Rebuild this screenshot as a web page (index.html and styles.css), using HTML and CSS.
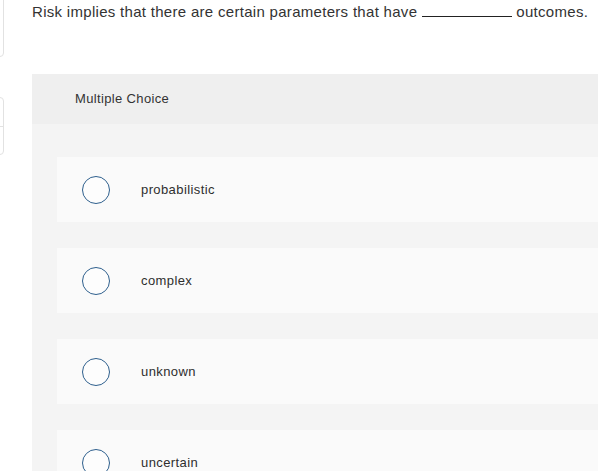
FILE: index.html
```html
<!DOCTYPE html>
<html lang="en">
<head>
<meta charset="utf-8">
<link rel="stylesheet" href="styles.css">
</head>
<body>
<div class="page">
  <aside class="rail">
    <div class="rail-box rail-box-top"></div>
    <div class="rail-box rail-box-split">
      <div class="rail-cell"></div>
      <div class="rail-cell"></div>
    </div>
  </aside>
  <main class="content">
    <p class="question">Risk implies that there are certain parameters that have <span class="blank"></span> outcomes.</p>
    <section class="panel">
      <header class="panel-head">Multiple Choice</header>
      <div class="options">
        <label class="option"><span class="radio"></span><span class="opt-text">probabilistic</span></label>
        <label class="option"><span class="radio"></span><span class="opt-text">complex</span></label>
        <label class="option"><span class="radio"></span><span class="opt-text">unknown</span></label>
        <label class="option"><span class="radio"></span><span class="opt-text">uncertain</span></label>
      </div>
    </section>
  </main>
</div>
</body>
</html>
```

FILE: styles.css
```css
html, body {
  margin: 0;
  padding: 0;
  background: #ffffff;
  overflow: hidden;
  height: 471px;
}
.page {
  display: flex;
  align-items: flex-start;
  font-family: "Liberation Sans", Arial, sans-serif;
  color: #333333;
}
.rail {
  display: flex;
  flex-direction: column;
  gap: 40px;
  width: 40px;
  margin-left: -36px;
  margin-top: -8px;
  flex: none;
}
.rail-box {
  border: 1px solid #e2e2e2;
  border-radius: 4px;
  box-sizing: border-box;
}
.rail-box-top {
  height: 65px;
}
.rail-box-split {
  display: flex;
  flex-direction: column;
  height: 58px;
}
.rail-cell {
  flex: 1;
}
.rail-cell + .rail-cell {
  border-top: 1px solid #e2e2e2;
}
.content {
  flex: 1;
  margin-left: 28px;
  margin-right: 1px;
  min-width: 0;
}
.question {
  margin: 0;
  padding-top: 3px;
  font-size: 15px;
  line-height: 18px;
  letter-spacing: 0.3px;
  color: #333333;
  white-space: nowrap;
}
.blank {
  display: inline-block;
  width: 90px;
  border-bottom: 1px solid #222;
  vertical-align: baseline;
}
.panel {
  margin-top: 53px;
  background: #f4f4f4;
}
.panel-head {
  background: #efefef;
  height: 50px;
  box-sizing: border-box;
  padding: 17px 0 0 43px;
  font-size: 13px;
  line-height: 16px;
  letter-spacing: 0.35px;
  color: #333333;
}
.options {
  display: flex;
  flex-direction: column;
  gap: 26px;
  padding: 33px 0 0 25px;
}
.option {
  display: flex;
  align-items: center;
  height: 65px;
  background: #fafafa;
  padding-left: 25px;
}
.radio {
  width: 28px;
  height: 28px;
  box-sizing: border-box;
  border: 1.5px solid #2e5f8d;
  border-radius: 50%;
  background: #fdfdfd;
  flex: none;
}
.opt-text {
  margin-left: 31px;
  font-size: 13px;
  letter-spacing: 0.4px;
  color: #2e2e2e;
}
```
